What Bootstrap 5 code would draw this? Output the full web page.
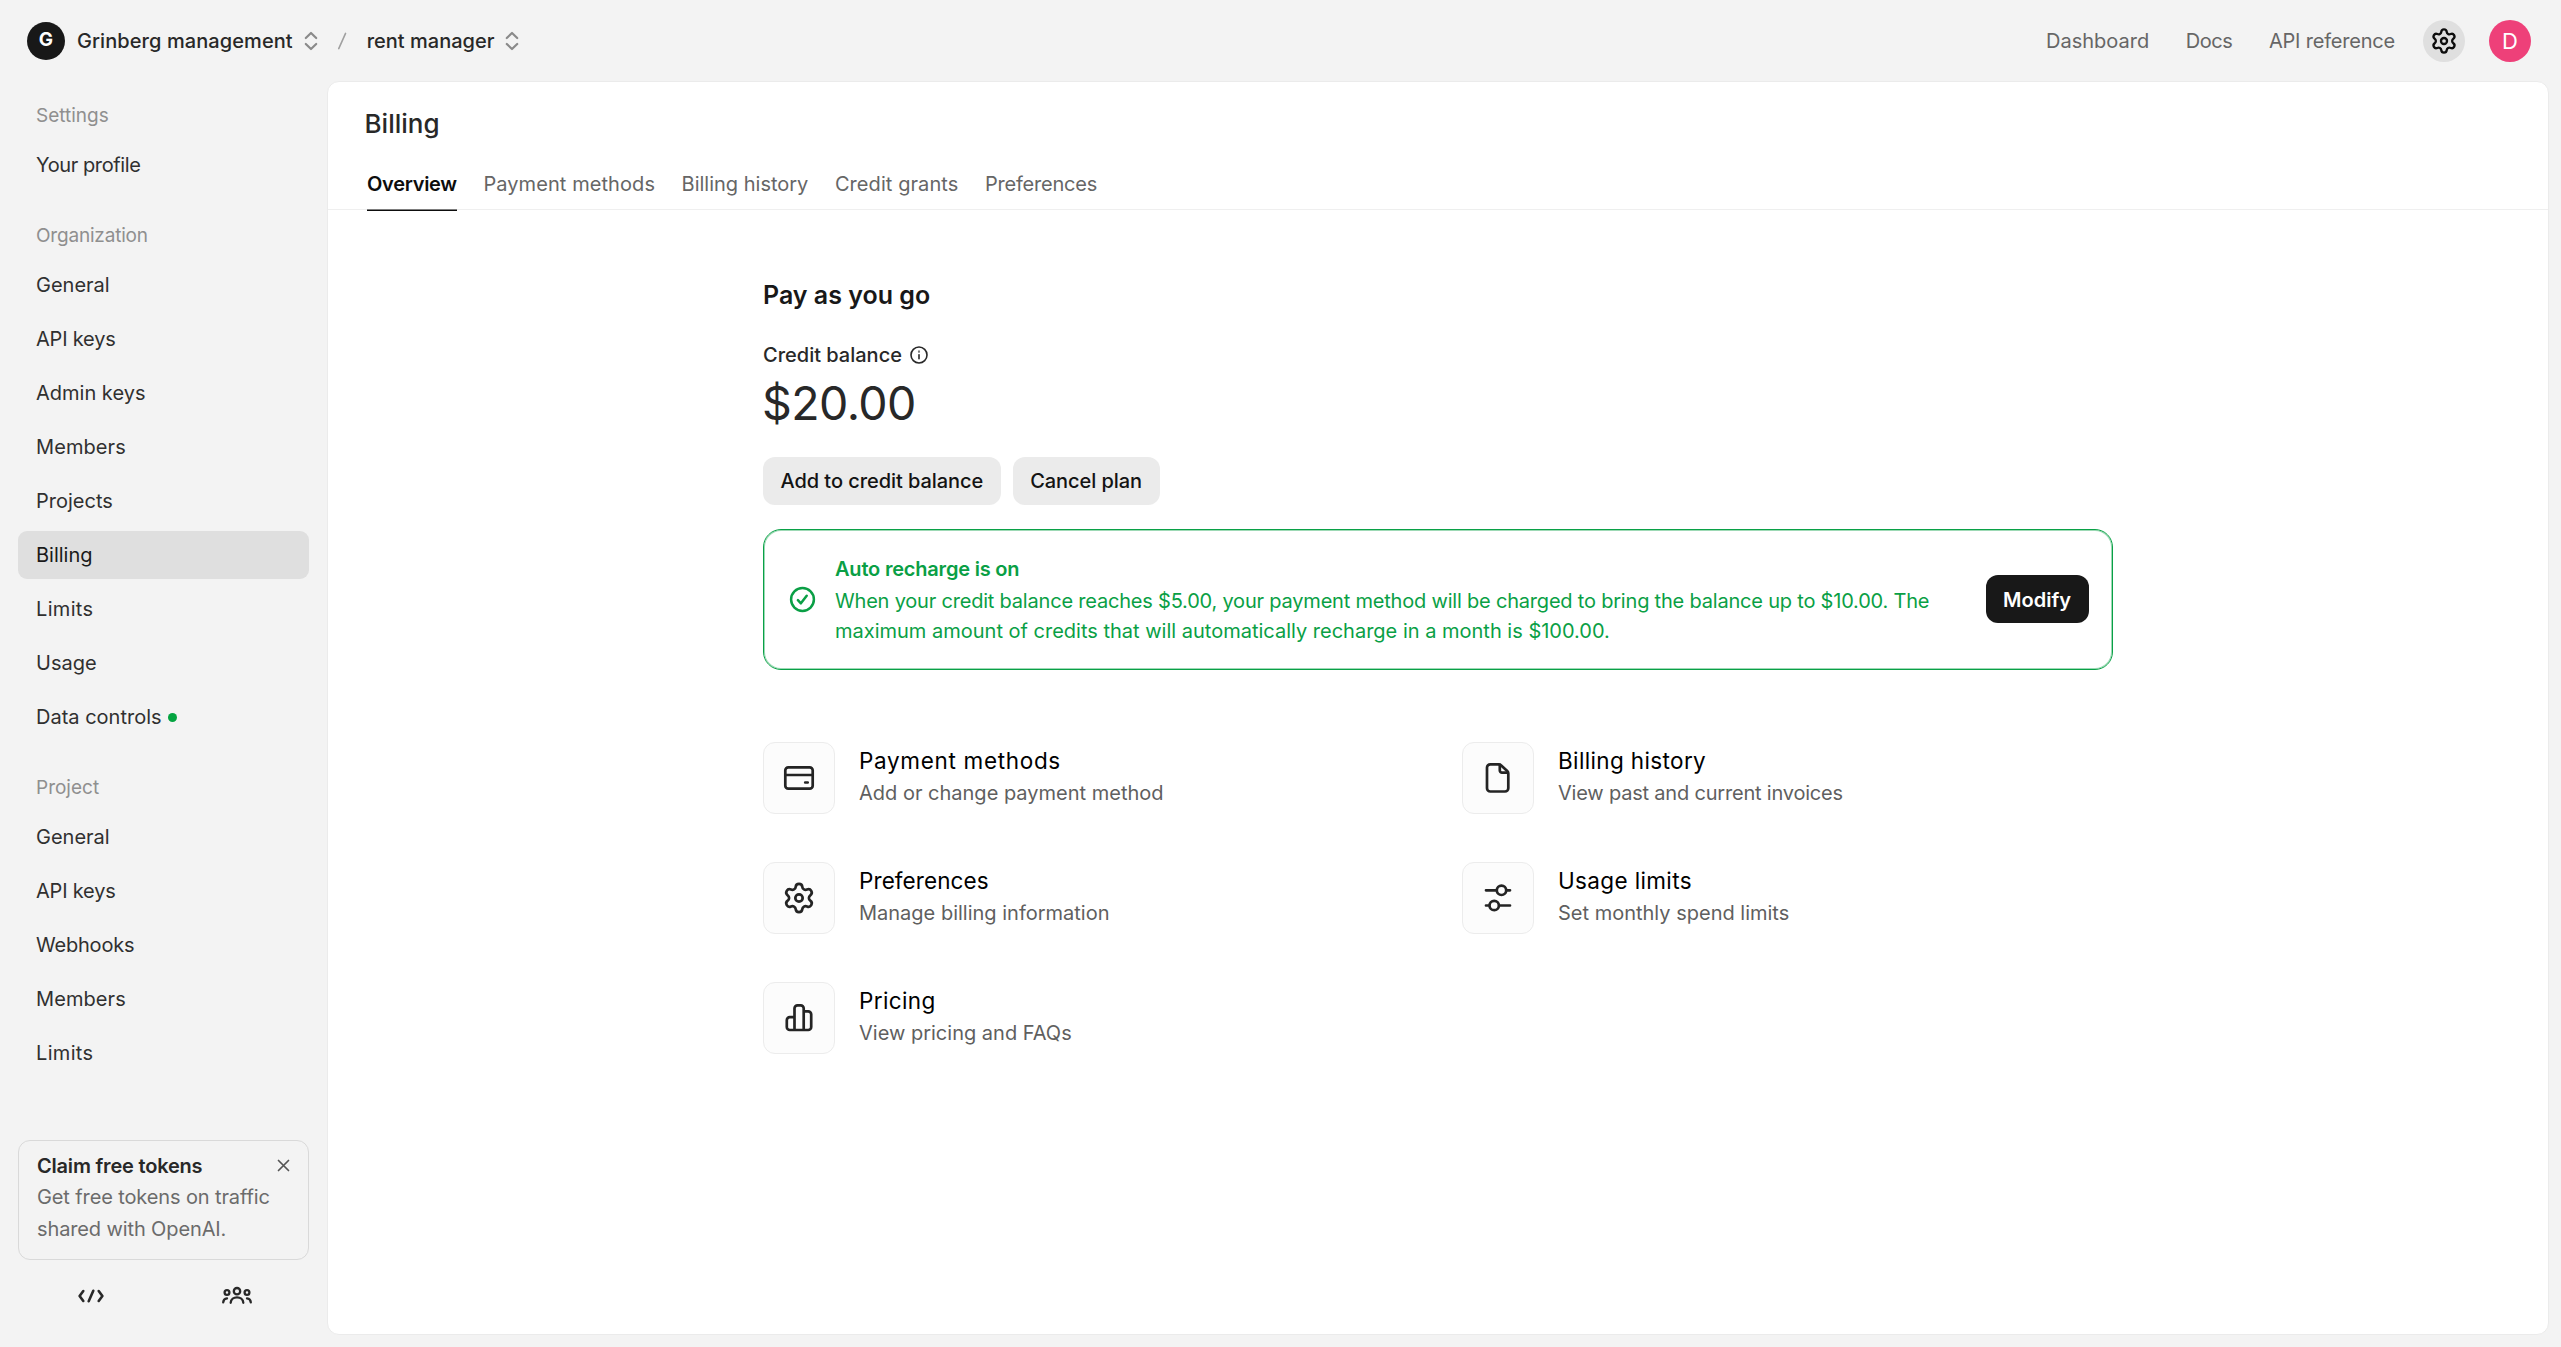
<!DOCTYPE html>
<html lang="en">
<head>
<meta charset="utf-8">
<meta name="viewport" content="width=device-width, initial-scale=1">
<title>Billing overview</title>
<link rel="stylesheet" href="https://cdn.jsdelivr.net/npm/bootstrap@5.3.0/dist/css/bootstrap.min.css">
<script src="https://cdn.jsdelivr.net/npm/bootstrap@5.3.0/dist/js/bootstrap.bundle.min.js"></script>
<style>
  body{font-family:Inter,"Liberation Sans",sans-serif;font-size:20px;line-height:30px;color:#282828;background:#f3f3f3;height:100vh;overflow:hidden}
  a{color:inherit;text-decoration:none}
  svg{display:block;fill:none;stroke:currentColor;stroke-linecap:round;stroke-linejoin:round;flex:none}
  .fw-mid{font-weight:500}
  .trk-n1{letter-spacing:-.01em}
  .trk-n2{letter-spacing:-.02em}
  .trk-p1{letter-spacing:.004em}
  .trk-p2{letter-spacing:.016em}
  .trk-p3{letter-spacing:.03em}

  .topbar{height:82px;padding:0 30px 0 27px}
  .org-mark{width:38px;height:38px;background:#181818;color:#fff;font-size:19px;font-weight:700;margin-right:12px;padding-bottom:2px}
  .switch-arrows{color:#8a8a8a;margin-left:11px}
  .path-slash{color:#a0a0a0;margin:0 20px 0 19px}
  .top-links{gap:36.5px;color:#666;margin-right:28px}
  .round-btn{width:42px;height:42px}
  .gear-btn{background:#dfdfdf;color:#0d0d0d;margin-right:24px}
  .user-mark{background:#ee4079;color:#fff;font-size:22px}

  .sidebar{width:327px;padding:0 18px 0 18px}
  .group-title{font-size:19px;color:#8f8f8f;padding-left:18px;margin:32px 0 10px}
  .group-title:first-child{margin-top:19px}
  .side-links{gap:6px}
  .side-links .nav-link{height:48px;padding:9px 18px;border-radius:9px;color:#303030;display:flex;align-items:center}
  .side-links .nav-link.active{background:#dfdfdf;color:#1a1a1a}
  .new-dot{width:9px;height:9px;background:#04a440;margin-left:6px}
  .promo{height:120px;border:1px solid #d9d9d9;border-radius:12px;padding:9px 17px 0 18px;line-height:32px}
  .promo-title{height:31px}
  .promo-close{color:#555}
  .promo-text{color:#6b6b6b;letter-spacing:-.006em}
  .mode-row{height:87px;padding-left:1px;color:#282828}
  .mode-row div{width:147px}
  .mode-row div:first-child{margin-right:1.5px}

  .panel{background:#fff;border:1px solid #ebebeb;border-radius:12px;margin:-1px 12.5px 12.5px 0}
  .panel-title{font-size:26px;font-weight:500;line-height:36px;padding:24px 0 0 36.5px;margin:0}
  .tabs{height:66px;margin-top:2px;padding-left:39px;gap:26.5px;border-bottom:1px solid #efefef;color:#666}
  .tabs a{padding-top:25px;height:67px}
  .tabs .current{color:#0d0d0d;font-weight:600;letter-spacing:-.014em;box-shadow:inset 0 -2px 0 -.5px #0d0d0d}

  .wrap{width:1350px;margin:66px auto 0 435px}
  .plan-title{font-size:25px;font-weight:600;color:#181818;line-height:38px}
  .bal-label{margin-top:26px;gap:8px}
  .bal-sum{font-size:46.5px;line-height:60px;letter-spacing:-.012em;margin:3px 0 24px -1px}
  .bal-actions{gap:12px}
  .soft-btn{height:48px;border-radius:12px;background:#ebebeb;color:#131313;font-size:20px;font-weight:500;padding:0 17.5px;border:0;line-height:30px;letter-spacing:-.003em}
  .recharge{margin-top:24px;height:141px;border:1px solid #09a146;border-radius:18px;color:#0a9f45;padding:0 23.5px 1px 24.5px;box-shadow:inset 0 0 0 1px rgba(9,161,70,.4)}
  .recharge p{line-height:30px}
  .recharge-title{margin-bottom:2px}
  .recharge-text{margin-left:19.5px;padding-top:1px}
  .dark-btn{height:48px;width:103px;border-radius:12px;background:#181818;color:#fff;font-size:20px;font-weight:600;padding:1px 0 0;border:0}
  .link-grid{display:grid;grid-template-columns:651px 651px;gap:48px;margin-top:72px}
  .icon-tile{width:72px;height:72px;border:1px solid #ececec;border-radius:12px;background:#fcfcfc;color:#242424;margin-right:24px}
  .tile-copy{padding-bottom:2px}
  .tile-name{font-size:22.5px;font-weight:400;color:#000;line-height:32px}
  .tile-note{color:#5f5f5f;line-height:33px}
</style>
</head>
<body class="d-flex flex-column">

<svg width="0" height="0" class="position-absolute" aria-hidden="true">
  <symbol id="gear" viewBox="0 0 24 24"><path d="M9.671 4.136a2.34 2.34 0 0 1 4.659 0 2.34 2.34 0 0 0 3.319 1.915 2.34 2.34 0 0 1 2.33 4.033 2.34 2.34 0 0 0 0 3.831 2.34 2.34 0 0 1-2.33 4.033 2.34 2.34 0 0 0-3.319 1.915 2.34 2.34 0 0 1-4.659 0 2.34 2.34 0 0 0-3.32-1.915 2.34 2.34 0 0 1-2.33-4.033 2.34 2.34 0 0 0 0-3.831A2.34 2.34 0 0 1 6.35 6.051a2.34 2.34 0 0 0 3.319-1.915"/><circle cx="12" cy="12" r="2.6"/></symbol>
  <symbol id="updown" viewBox="0 0 14 20"><path d="M1.800 7 7 2l5.200 5M1.800 13l5.200 5 5.200-5"/></symbol>
</svg>

<header class="topbar d-flex align-items-center flex-shrink-0">
  <span class="org-mark rounded-circle d-flex align-items-center justify-content-center">G</span>
  <span class="fw-mid trk-p1">Grinberg management</span>
  <svg class="switch-arrows" width="14" height="20" stroke-width="2.200"><use href="#updown"/></svg>
  <svg class="path-slash" width="10" height="20" viewBox="0 0 10 20" stroke-width="1.700"><path d="M8.500 2.500 1.800 17.500"/></svg>
  <span class="fw-mid">rent manager</span>
  <svg class="switch-arrows" width="14" height="20" stroke-width="2.200"><use href="#updown"/></svg>
  <nav class="top-links d-flex ms-auto">
    <a href="#">Dashboard</a><a href="#" class="trk-n2">Docs</a><a href="#" class="trk-n1">API reference</a>
  </nav>
  <span class="gear-btn round-btn rounded-circle d-flex align-items-center justify-content-center"><svg width="28" height="28" stroke-width="2"><use href="#gear"/></svg></span>
  <span class="user-mark round-btn rounded-circle d-flex align-items-center justify-content-center">D</span>
</header>

<div class="d-flex flex-grow-1">
  <aside class="sidebar d-flex flex-column flex-shrink-0">
    <div class="group-title">Settings</div>
    <nav class="side-links nav flex-column">
      <a class="nav-link trk-n2" href="#">Your profile</a>
    </nav>
    <div class="group-title trk-n1">Organization</div>
    <nav class="side-links nav flex-column">
      <a class="nav-link" href="#">General</a>
      <a class="nav-link trk-n1" href="#">API keys</a>
      <a class="nav-link" href="#">Admin keys</a>
      <a class="nav-link trk-p1" href="#">Members</a>
      <a class="nav-link" href="#">Projects</a>
      <a class="nav-link active" href="#">Billing</a>
      <a class="nav-link trk-p2" href="#">Limits</a>
      <a class="nav-link" href="#">Usage</a>
      <a class="nav-link" href="#">Data controls<span class="new-dot rounded-circle"></span></a>
    </nav>
    <div class="group-title">Project</div>
    <nav class="side-links nav flex-column">
      <a class="nav-link" href="#">General</a>
      <a class="nav-link trk-n1" href="#">API keys</a>
      <a class="nav-link trk-n1" href="#">Webhooks</a>
      <a class="nav-link trk-p1" href="#">Members</a>
      <a class="nav-link trk-p2" href="#">Limits</a>
    </nav>
    <div class="promo mt-auto">
      <div class="promo-title d-flex justify-content-between align-items-center">
        <span class="fw-semibold trk-n1">Claim free tokens</span>
        <svg class="promo-close" width="15" height="15" viewBox="0 0 15 15" stroke-width="1.700"><path d="m2.500 2.500 10 10m0-10-10 10"/></svg>
      </div>
      <div class="promo-text">Get free tokens on traffic<br>shared with OpenAI.</div>
    </div>
    <div class="mode-row d-flex">
      <div class="d-flex justify-content-center pt-4"><svg width="28" height="24" viewBox="0 0 28 24" stroke-width="2.600"><path d="M6.300 7 2.600 12l3.700 5M21.700 7l3.700 5-3.700 5M16.300 6.800 11.700 17.200"/></svg></div>
      <div class="d-flex justify-content-center pt-4"><svg width="32" height="24" viewBox="0 0 32 24" stroke-width="2.300"><circle cx="16" cy="7.200" r="3.200"/><circle cx="6" cy="8.500" r="2.400"/><circle cx="26" cy="8.500" r="2.400"/><path d="M9.700 18.800c.3-7.200 12.300-7.200 12.600 0M2.200 18.300c.2-2.400 1.600-3.800 3.800-4M29.800 18.300c-.2-2.400-1.600-3.800-3.800-4"/></svg></div>
    </div>
  </aside>

  <main class="panel flex-grow-1">
    <h1 class="panel-title">Billing</h1>
    <nav class="tabs d-flex">
      <a class="current" href="#">Overview</a>
      <a href="#" class="trk-p1">Payment methods</a>
      <a href="#">Billing history</a>
      <a href="#" class="trk-p1">Credit grants</a>
      <a href="#" class="trk-n1">Preferences</a>
    </nav>

    <section class="wrap">
      <div class="plan-title">Pay as you go</div>
      <div class="bal-label d-flex align-items-center fw-mid">Credit balance
        <svg width="18" height="18" viewBox="0 0 18 18" stroke-width="1.600"><circle cx="9" cy="9" r="8"/><path d="M9 8.700v4"/><circle cx="9" cy="5.600" r=".3"/></svg>
      </div>
      <div class="bal-sum">$20.00</div>
      <div class="bal-actions d-flex">
        <button class="soft-btn" type="button">Add to credit balance</button>
        <button class="soft-btn" type="button">Cancel plan</button>
      </div>

      <div class="recharge d-flex align-items-center">
        <svg width="27" height="27" viewBox="0 0 27 27" stroke-width="2.500"><circle cx="13.500" cy="13.500" r="11.400"/><path d="m8.900 14.200 3 3.100 5.800-7.600"/></svg>
        <div class="recharge-text flex-grow-1">
          <p class="recharge-title fw-semibold trk-n1">Auto recharge is on</p>
          <p class="mb-0"><span class="trk-n1">When your credit balance reaches $5.00, your payment method will be charged to bring the balance up to $10.00. The</span><br>maximum amount of credits that will automatically recharge in a month is $100.00.</p>
        </div>
        <button class="dark-btn" type="button">Modify</button>
      </div>

      <div class="link-grid">
        <a href="#" class="d-flex align-items-center">
          <span class="icon-tile d-flex align-items-center justify-content-center"><svg width="32" height="32" viewBox="0 0 32 32" stroke-width="2.700"><rect x="2.300" y="5.300" width="27.400" height="21.400" rx="3"/><path d="M2.300 13h27.400M22.200 20.500h2.500"/></svg></span>
          <span class="tile-copy"><span class="tile-name trk-p3 d-block">Payment methods</span><span class="tile-note d-block">Add or change payment method</span></span>
        </a>
        <a href="#" class="d-flex align-items-center">
          <span class="icon-tile d-flex align-items-center justify-content-center"><svg width="32" height="32" viewBox="0 0 32 32" stroke-width="2.700"><path d="M8.300 2.300h8.200c1 0 1.800.3 2.500 1l6.200 5.700c.7.700 1.100 1.500 1.100 2.500v14.700a3.300 3.300 0 0 1-3.300 3.300H8.300A3.300 3.300 0 0 1 5 26.200V5.600a3.300 3.300 0 0 1 3.300-3.300z"/><path d="M17.800 2.800v5.600a2.200 2.200 0 0 0 2.200 2.200h5.800"/></svg></span>
          <span class="tile-copy"><span class="tile-name trk-p2 d-block">Billing history</span><span class="tile-note trk-n1 d-block">View past and current invoices</span></span>
        </a>
        <a href="#" class="d-flex align-items-center">
          <span class="icon-tile d-flex align-items-center justify-content-center"><svg width="34" height="34" stroke-width="1.900"><use href="#gear"/></svg></span>
          <span class="tile-copy"><span class="tile-name trk-p1 d-block">Preferences</span><span class="tile-note d-block">Manage billing information</span></span>
        </a>
        <a href="#" class="d-flex align-items-center">
          <span class="icon-tile d-flex align-items-center justify-content-center"><svg width="32" height="32" viewBox="0 0 32 32" stroke-width="2.700"><circle cx="19.500" cy="8.300" r="4.700"/><circle cx="12.200" cy="23.500" r="4.700"/><path d="M4 8.300h10.500M24.500 8.300H28M4 23.500h3M17.200 23.500H28"/></svg></span>
          <span class="tile-copy"><span class="tile-name trk-p2 d-block">Usage limits</span><span class="tile-note d-block">Set monthly spend limits</span></span>
        </a>
        <a href="#" class="d-flex align-items-center">
          <span class="icon-tile d-flex align-items-center justify-content-center"><svg width="32" height="32" viewBox="0 0 32 32" stroke-width="2.700"><path d="M11.500 28H6.800a3 3 0 0 1-3-3v-6.800a3 3 0 0 1 3-3h4.700M20.700 9.300h4.500a3 3 0 0 1 3 3V25a3 3 0 0 1-3 3h-4.500M11.500 28V6.300a3 3 0 0 1 3-3h3.200a3 3 0 0 1 3 3V28z"/></svg></span>
          <span class="tile-copy"><span class="tile-name trk-p2 d-block">Pricing</span><span class="tile-note d-block">View pricing and FAQs</span></span>
        </a>
      </div>
    </section>
  </main>
</div>
</body>
</html>
